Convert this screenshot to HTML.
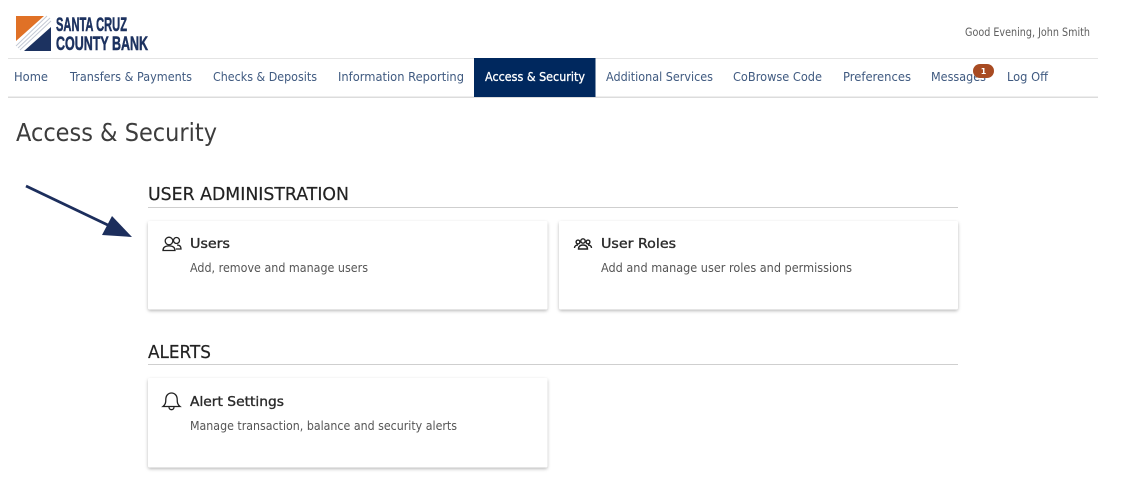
<!DOCTYPE html>
<html><head><meta charset="utf-8"><title>Access &amp; Security</title>
<style>
html,body{margin:0;padding:0;background:#fff;width:1131px;height:486px;overflow:hidden}
svg{display:block}
text{font-family:"DejaVu Sans","Liberation Sans",sans-serif}
.nav{font-size:12.5px;fill:#3f5a80}
.t{font-size:13.5px;fill:#2b2b2b;stroke:#2b2b2b;stroke-width:.35px}
.d{font-size:12.5px;fill:#555}
.h{font-size:18px;fill:#222;stroke:#222;stroke-width:.2px}
.card{fill:#fff;filter:url(#sh)}
.logo{font-family:"Liberation Sans",sans-serif;font-weight:bold;fill:#1f3360;stroke:#1f3360;stroke-width:.55px;font-size:19.5px}
.soft{filter:url(#soft)}
</style></head><body>
<svg width="1131" height="486" viewBox="0 0 1131 486" xmlns="http://www.w3.org/2000/svg">
<defs>
<filter id="sh" x="-5%" y="-10%" width="110%" height="125%"><feDropShadow dx="0" dy="1.5" stdDeviation="1.6" flood-color="#000" flood-opacity=".28"/></filter>
<filter id="soft" x="-2%" y="-2%" width="104%" height="104%"><feGaussianBlur stdDeviation=".3"/></filter>
</defs>
<rect width="1131" height="486" fill="#fff"/>

<!-- nav lines and cards -->
<rect x="8" y="58" width="1090" height="1" fill="#e4e4e4"/>
<rect x="8" y="96.500" width="1090" height="1.500" fill="#dcdcdc"/>
<rect x="474" y="58" width="121.500" height="39" fill="#00285e"/>
<rect x="148" y="207" width="810" height="1" fill="#cfcfcf"/>
<rect x="148" y="364" width="810" height="1" fill="#cfcfcf"/>
<rect class="card" x="148" y="221" width="399.500" height="88.500" rx="2"/>
<rect class="card" x="559" y="221" width="399" height="88.500" rx="2"/>
<rect class="card" x="148" y="378" width="399.500" height="89.500" rx="2"/>

<g class="soft">
<!-- logo -->
<polygon points="16,16 44,16 16,41" fill="#e07127"/>
<polygon points="51,27 51,51 24,51" fill="#1f3360"/>
<g stroke="#c4c9d4" stroke-width="1" fill="none">
<path d="M16,46 L47,16"/><path d="M18,48 L50,18"/><path d="M20,50 L51,21"/>
</g>
<text class="logo" x="56" y="31" textLength="71" lengthAdjust="spacingAndGlyphs">SANTA CRUZ</text>
<text class="logo" x="56" y="50" textLength="92" lengthAdjust="spacingAndGlyphs">COUNTY BANK</text>

<text x="965" y="36" font-size="11.500" fill="#5e5e5e" textLength="125" lengthAdjust="spacingAndGlyphs">Good Evening, John Smith</text>

<g class="nav">
<text x="14" y="81" textLength="34" lengthAdjust="spacingAndGlyphs">Home</text>
<text x="70" y="81" textLength="122" lengthAdjust="spacingAndGlyphs">Transfers &amp; Payments</text>
<text x="213" y="81" textLength="104" lengthAdjust="spacingAndGlyphs">Checks &amp; Deposits</text>
<text x="338" y="81" textLength="126" lengthAdjust="spacingAndGlyphs">Information Reporting</text>
<text x="485" y="81" textLength="100" lengthAdjust="spacingAndGlyphs" style="fill:#fff;stroke:#fff;stroke-width:.3px">Access &amp; Security</text>
<text x="606" y="81" textLength="107" lengthAdjust="spacingAndGlyphs">Additional Services</text>
<text x="733" y="81" textLength="89" lengthAdjust="spacingAndGlyphs">CoBrowse Code</text>
<text x="843" y="81" textLength="68" lengthAdjust="spacingAndGlyphs">Preferences</text>
<text x="931" y="81" textLength="55" lengthAdjust="spacingAndGlyphs">Messages</text>
<text x="1007" y="81" textLength="41" lengthAdjust="spacingAndGlyphs">Log Off</text>
</g>
<rect x="973" y="64" width="21" height="14" rx="7" fill="#a84c22"/>
<text x="983.500" y="74" font-size="8" font-weight="bold" fill="#fff" text-anchor="middle">1</text>

<text x="16" y="141" font-size="25" fill="#3c3c3c" textLength="201" lengthAdjust="spacingAndGlyphs">Access &amp; Security</text>

<!-- arrow -->
<path d="M26,186 L112,227" stroke="#1c2d5c" stroke-width="2.800" fill="none"/>
<polygon points="112,216 132,237 102,235" fill="#1c2d5c"/>

<text class="h" x="148" y="200" textLength="201" lengthAdjust="spacingAndGlyphs">USER ADMINISTRATION</text>
<text class="h" x="148" y="358" textLength="63" lengthAdjust="spacingAndGlyphs">ALERTS</text>

<text class="t" x="190" y="248" textLength="40" lengthAdjust="spacingAndGlyphs">Users</text>
<text class="d" x="190" y="272" textLength="178" lengthAdjust="spacingAndGlyphs">Add, remove and manage users</text>
<text class="t" x="601" y="248" textLength="75" lengthAdjust="spacingAndGlyphs">User Roles</text>
<text class="d" x="601" y="272" textLength="251" lengthAdjust="spacingAndGlyphs">Add and manage user roles and permissions</text>
<text class="t" x="190" y="406" textLength="94" lengthAdjust="spacingAndGlyphs">Alert Settings</text>
<text class="d" x="190" y="430" textLength="267" lengthAdjust="spacingAndGlyphs">Manage transaction, balance and security alerts</text>

<!-- users icon -->
<g fill="none" stroke="#222" stroke-width="1.300">
<circle cx="169" cy="241" r="3.800"/>
<path d="M163,250.500 c0,-3.600 2.500,-4.600 6,-4.600 s6,1 6,4.600 z"/>
<circle cx="176.500" cy="240.500" r="3"/>
<path d="M177,245 c2.800,0 4,1.400 4,4 h-5"/>
</g>
<!-- roles icon -->
<g fill="none" stroke="#222" stroke-width="1.400">
<circle cx="578" cy="242" r="1.900"/>
<circle cx="583" cy="241" r="2.200"/>
<circle cx="588" cy="242" r="1.900"/>
<path d="M574.500,248 c0,-2 1.500,-3 3.500,-3 M591.500,248 c0,-2 -1.500,-3 -3.500,-3"/>
<path d="M578.500,249 c0,-2.800 2,-4 4.500,-4 s4.500,1.200 4.500,4 z"/>
</g>
<!-- bell -->
<g fill="none" stroke="#222" stroke-width="1.300">
<path d="M163,406.500 c2.500,-2 2.800,-4 2.800,-7 c0,-4 2.500,-6.500 5.700,-6.500 s5.700,2.500 5.700,6.500 c0,3 .3,5 2.800,7 z"/>
<path d="M169,407 c0,3.600 5,3.600 5,0"/>
</g>
</g>
</svg>
</body></html>
